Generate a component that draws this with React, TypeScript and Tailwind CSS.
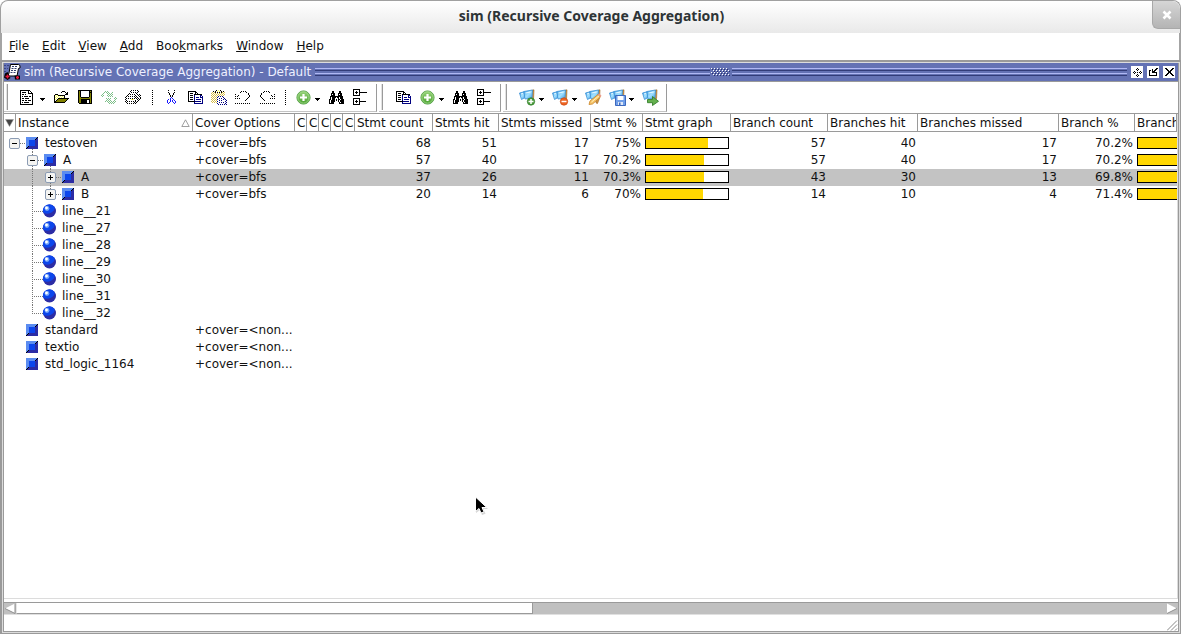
import React from "react";

type Palette = Record<string, string>;

const ink: Palette = {
  "#": "#000000",
  o: "#808000",
  y: "#ffff66",
  w: "#ffffff",
  b: "#1a1aff",
  n: "#000080",
  g: "#8f8f8f",
  l: "#c0c0c0",
  e: "#7cbf88",
  r: "#d00028",
  k: "#d6bd4a",
};

function Bitmap({ rows }: { rows: string[] }) {
  const width = Math.max(...rows.map((row) => row.length));
  const cells: React.ReactNode[] = [];
  rows.forEach((row, y) => {
    let x = 0;
    while (x < row.length) {
      const c = row[x];
      let end = x + 1;
      while (end < row.length && row[end] === c) end++;
      if (ink[c]) {
        cells.push(<rect key={`${x}-${y}`} x={x} y={y} width={end - x} height={1} fill={ink[c]} />);
      }
      x = end;
    }
  });
  return (
    <svg width={width} height={rows.length} viewBox={`0 0 ${width} ${rows.length}`} shapeRendering="crispEdges" aria-hidden="true" className="shrink-0">
      {cells}
    </svg>
  );
}

// Disabled icons are drawn with every second pixel left out.
function dither(art: string[]) {
  return art.map((row, y) => row.split("").map((c, x) => ((x + y) % 2 ? "." : c)).join(""));
}

const documentRows = [
  "##########......",
  "#wwwwwww#w#.....",
  "#w####ww#ww#....",
  "#wwwwwww#####...",
  "#w##w#wwwwww#...",
  "#wwwwwwwwwww#...",
  "#w#w####w##w#...",
  "#wwwwwwwwwww#...",
  "#w##w####www#...",
  "#wwwwwwwwwww#...",
  "#w##w##w###w#...",
  "#wwwwwwwwwww#...",
  "#w#w#####www#...",
  "#wwwwwwwwwww#...",
  "#############...",
];

const folderRows = [
  ".........###....",
  "........#...#.#.",
  ".............##.",
  "..###.......###.",
  ".#ywy#######....",
  ".#wywywywyw#....",
  ".#ywywywywy#....",
  ".#wyw###########",
  ".#yw#ooooooooo#.",
  ".#w#ooooooooo#..",
  ".##ooooooooo#...",
  ".###########....",
];

const saveRows = [
  "##############",
  "#o#wwwwwwww#o#",
  "#o#wwwwwwww###",
  "#o#wwwwwwww#o#",
  "#o#wwwwwwww#o#",
  "#o#wwwwwwww#o#",
  "#o#wwwwwwww#o#",
  "#oo########oo#",
  "#oooooooooooo#",
  "#oo#########o#",
  "#oo######ww#o#",
  "#oo######ww#o#",
  "#oo######ww#o#",
  ".#############",
];

const refreshRows = dither([
  "...eeeee........",
  "..eeeeeee..e....",
  ".eee..eeeeee....",
  "eee....eeeee....",
  "eee...eeeeee....",
  ".e.....eeeee..e.",
  "..............ee",
  ".....eeeee...eee",
  ".....eeee....eee",
  "....eeeeee..eee.",
  "....eeeeeeeeeee.",
  "....e..eeeeeee..",
  "........eeeee...",
]);

const printRows = [
  "......#.#.#.#...",
  ".....#.......#..",
  "......#.#.#.#...",
  "....#......#....",
  "...#.#.#.#..#.#.",
  "..#.......#..#.#",
  ".#.#.#.#.#.#..#.",
  "#.........#.#..#",
  ".#.#.#.#.#.#.#.#",
  "#.....yky...#.#.",
  ".#........#..#..",
  "#.#.#.#.#.#.#...",
  ".#.......#.#....",
  "..#.#.#.#.#.....",
];

const cutRows = [
  ".#.....#.",
  ".........",
  ".#.....#.",
  "..#...#..",
  "..#...#..",
  "...#.#...",
  "...#.#...",
  "....b....",
  "...b.b...",
  ".b.b..b..",
  "b..b.b.b.",
  "b..b.b..b",
  "b.b...b.b",
  ".b.....b.",
];

const copyRows = [
  "########.......",
  "#wwwwww##......",
  "#w###ww#w#.....",
  "#wwwww########.",
  "#w###wnwwwwwnn.",
  "#wwwwwnwwwwwnwn",
  "#w###wnwnnnwnnn",
  "#wwwwwnwwwwwwwn",
  "#w###wnwnnnnnwn",
  "#wwwwwnwwwwwwwn",
  "#######nnnnnnwn",
  "......nwwwwwwwn",
  "......nnnnnnnnn",
];

const pasteRows = [
  ".....#.y.#......",
  "..#.#.y.y.#.#...",
  ".k.k#.#.#.#k.k..",
  "k.k.k.k.k.k.k...",
  ".k.k.k.k.k.k.k..",
  "k.k.k.k.k.k.k...",
  ".k.k.k.n.n.n....",
  "k.k.k.n.....n...",
  ".k.k.k..n.n..n..",
  "k.k.k.n.....n.n.",
  ".k.k.k..n.n....n",
  "k.k.k.n.......n.",
  ".k.k.k..n.n.n..n",
  "......n.......n.",
  ".......n.n.n.n.n",
];

const undoRows = [
  "......#.#.#.....",
  ".....#.....#....",
  ".............#..",
  "#............#..",
  "...#..........#.",
  "#.#...........#.",
  ".............#..",
  "#.#.#.......#...",
  "...........#....",
  "..........#.....",
  "................",
  "................",
  "#.#.#.#.#.#.#.#.",
];

const redoRows = undoRows.map((row) => row.split("").reverse().join(""));

const searchRows = [
  "...##.....##...",
  "...##.....##...",
  "..####...####..",
  "..#w##...#w##..",
  "..####...####..",
  ".#############.",
  ".#w####.##w###.",
  ".#w###...#w###.",
  "##w###w#w##w###",
  "#w####w#w#w####",
  "#w####...#w####",
  "#w###.....#w###",
  "#####.....#####",
];

const treeRows = [
  "#######.......",
  "#wwwww#.......",
  "#ww#ww#.......",
  "#w###w########",
  "#ww#ww#.......",
  "#wwwww#.......",
  "#######.......",
  "..............",
  "..............",
  "#######.......",
  "#wwwww#.......",
  "#ww#ww#.......",
  "#w###w#######.",
  "#ww#ww#.......",
  "#wwwww#.......",
  "#######.......",
];

const moveRows = [
  "....#....",
  "...#.#...",
  "....#....",
  ".#.....#.",
  "#.#.#.#.#",
  ".#.....#.",
  "....#....",
  "...#.#...",
  "....#....",
];

const dockRows = [
  ".......##",
  "...#..##.",
  "##.#.##..",
  "#..###...",
  "#..#####.",
  "#......#.",
  "#......#.",
  "########.",
];

const closeRows = [
  "##.....##",
  ".##...##.",
  "..##.##..",
  "...###...",
  "...###...",
  "..##.##..",
  ".##...##.",
  "##.....##",
];

function AddIcon() {
  return (
    <svg width="15" height="15" viewBox="0 0 15 15" aria-hidden="true">
      <defs>
        <linearGradient id="addFill" x1="0" y1="0" x2="0" y2="1">
          <stop offset="0" stopColor="#9bd47c" />
          <stop offset="1" stopColor="#46a02e" />
        </linearGradient>
      </defs>
      <circle cx="7.5" cy="7.5" r="6.6" fill="url(#addFill)" stroke="#5fa651" />
      <circle cx="7.5" cy="7.5" r="5.6" fill="none" stroke="#a5dc8c" strokeWidth="0.8" />
      <path d="M7.5 4v7M4 7.5h7" stroke="#fff" strokeWidth="2.2" />
    </svg>
  );
}

type Badge = "add" | "remove" | "edit" | "save" | "export";

function FilterIcon({ badge }: { badge: Badge }) {
  return (
    <svg width="17" height="17" viewBox="0 0 17 17" aria-hidden="true">
      <defs>
        <linearGradient id="lens" x1="0" y1="0" x2="1" y2="1">
          <stop offset="0" stopColor="#2f9ae8" />
          <stop offset="0.5" stopColor="#a4e2ff" />
          <stop offset="1" stopColor="#3c9ae6" />
        </linearGradient>
      </defs>
      <path d="M12 1.500 15 .8 14.600 9 12.500 14.500 11 14z" fill="#cf9344" stroke="#9c6420" strokeWidth="0.6" />
      <path d="M.5 4 5 2.800 6 8.500 2.500 10.500z" fill="url(#lens)" stroke="#3a8fd4" strokeWidth="0.8" />
      <path d="M4.800 2.500 13.500 1 13 9 6 10z" fill="url(#lens)" stroke="#3a8fd4" strokeWidth="0.8" />
      <path d="M2 5 4 4.500M6.500 4 11.500 3" stroke="#e9f8ff" strokeWidth="1.2" />
      {badge === "add" && (
        <>
          <circle cx="12" cy="12.5" r="3.7" fill="#4c9c3c" stroke="#2f7d2b" strokeWidth="0.7" />
          <path d="M12 10v5M9.5 12.5h5" stroke="#fff" strokeWidth="1.5" />
        </>
      )}
      {badge === "remove" && (
        <>
          <circle cx="12" cy="12.5" r="3.7" fill="#ee6420" stroke="#cc4812" strokeWidth="0.7" />
          <path d="M9.5 12.5h5" stroke="#fff" strokeWidth="1.5" />
        </>
      )}
      {badge === "edit" && (
        <>
          <path d="M4 15.5 5 12 13 5.5l2.5 2.5L7.5 15z" fill="#f7c66a" stroke="#c98324" strokeWidth="0.8" />
          <path d="M6.5 13 14 6.8" stroke="#fff1bd" />
          <path d="m13 5.5 1.2-1 2.3 2.3-1 1.2z" fill="#e99a8c" />
        </>
      )}
      {badge === "save" && (
        <>
          <path d="M6.5 6.5h10v10h-10z" fill="#6f9ee8" stroke="#3c69be" />
          <path d="M8.5 7h6v4h-6z" fill="#fff" />
          <path d="M9 13h5v3H9z" fill="#dfe8f7" />
          <path d="M10 13.5h1.5V16H10z" fill="#3c69be" />
        </>
      )}
      {badge === "export" && (
        <path d="M5.5 10.5h5V7.5l6 4.8-6 4.2v-2.8h-5z" fill="#65b04e" stroke="#35802c" strokeWidth="0.9" />
      )}
    </svg>
  );
}

function ToolButton({ label, menu, children }: { label: string; menu?: boolean; children: React.ReactNode }) {
  return (
    <button type="button" aria-label={label} className="flex h-6 shrink-0 items-center">
      <span className="flex w-6 justify-center">{children}</span>
      {menu && (
        <svg width="9" height="9" viewBox="0 0 9 9" shapeRendering="crispEdges" aria-hidden="true">
          <path d="M0 5h5v1H0zM1 6h3v1H1zM2 7h1v1H2z" />
        </svg>
      )}
    </button>
  );
}

function ToolGroup({ label, children }: { label: string; children: React.ReactNode }) {
  return (
    <div role="toolbar" aria-label={label} className="flex h-7 items-center border-r border-b border-[#9a9a9a] border-b-[#c4c4c4] pr-1">
      <span className="mr-2 ml-0.5 h-[26px] w-0.5 border-r border-l border-r-[#9a9a9a] border-l-[#e2e2e2]" />
      {children}
    </div>
  );
}

function DottedRule({ wide }: { wide?: boolean }) {
  return (
    <span className={wide ? "flex w-[14px] justify-center" : "flex w-3 justify-center"}>
      <svg width="1" height="15" viewBox="0 0 1 15" shapeRendering="crispEdges" aria-hidden="true">
        <path d="M.5 0v15" stroke="#000" strokeDasharray="1 1" />
      </svg>
    </span>
  );
}

type Kind = "block" | "process";

interface Row {
  name: string;
  kind: Kind;
  depth: number;
  toggle?: "open" | "closed";
  cover?: string;
  stmt?: [string, string, string, string];
  branch?: [string, string, string, string];
  selected?: boolean;
}

const rows: Row[] = [
  { name: "testoven", kind: "block", depth: 0, toggle: "open", cover: "+cover=bfs", stmt: ["68", "51", "17", "75%"], branch: ["57", "40", "17", "70.2%"] },
  { name: "A", kind: "block", depth: 1, toggle: "open", cover: "+cover=bfs", stmt: ["57", "40", "17", "70.2%"], branch: ["57", "40", "17", "70.2%"] },
  { name: "A", kind: "block", depth: 2, toggle: "closed", cover: "+cover=bfs", stmt: ["37", "26", "11", "70.3%"], branch: ["43", "30", "13", "69.8%"], selected: true },
  { name: "B", kind: "block", depth: 2, toggle: "closed", cover: "+cover=bfs", stmt: ["20", "14", "6", "70%"], branch: ["14", "10", "4", "71.4%"] },
  ...["21", "27", "28", "29", "30", "31", "32"].map((n): Row => ({ name: `line__${n}`, kind: "process", depth: 1 })),
  { name: "standard", kind: "block", depth: 0, cover: "+cover=<non..." },
  { name: "textio", kind: "block", depth: 0, cover: "+cover=<non..." },
  { name: "std_logic_1164", kind: "block", depth: 0, cover: "+cover=<non..." },
];

function TreeMark({ row, last }: { row: Row; last: boolean }) {
  const base = row.depth * 18;
  const mid = 10 + base;
  const width = 39 + base;
  const lines: string[] = [];
  if (row.toggle) lines.push(`M${base + 16} 8.5h6`);
  if (row.toggle === "open") lines.push(`M${28.5 + base} 14v3`);
  if (row.depth === 2) {
    lines.push("M28.5 0v17");
    lines.push(row.name === "B" ? "M46.5 0v4" : "M46.5 0v4M46.5 14v3");
  }
  if (row.depth === 1 && row.toggle) lines.push("M28.5 0v4M28.5 14v3");
  if (row.kind === "process") lines.push(last ? "M28.5 0v9M30 8.5h10" : "M28.5 0v17M30 8.5h10");
  return (
    <svg width={width} height="17" viewBox={`0 0 ${width} 17`} aria-hidden="true" className="shrink-0">
      <path d={lines.join("")} fill="none" stroke="#777" strokeDasharray="1 1" shapeRendering="crispEdges" />
      {row.toggle && (
        <>
          <rect x={mid - 4.5} y="3.5" width="10" height="10" rx="1.5" fill="#f4f4f2" stroke="#8c9cb4" />
          <path d={`M${mid - 2} 8.5h5`} stroke="#000" shapeRendering="crispEdges" />
          {row.toggle === "closed" && <path d={`M${mid + 0.5} 6v5`} stroke="#000" shapeRendering="crispEdges" />}
        </>
      )}
      {row.kind === "block" ? (
        <g transform={`translate(${22 + base} 2)`} shapeRendering="crispEdges">
          <path d="M0 0h12L0 12z" fill="#5b8cf0" />
          <path d="M12 0v12H0z" fill="#2c2ca4" />
          <path d="m0 12 3-3M9 3l3-3" stroke="#000" />
          <path d="M3 3h6v6H3z" fill="#0c46ec" />
        </g>
      ) : (
        <g>
          <circle cx="45.5" cy="8" r="6.5" fill="#2c2ca4" />
          <path d="M39.200 9.500A6.400 6.400 0 0 1 50.500 4c.8 2-1 4.500-3.500 5.800-3 1.400-5.500 1.200-7.800-.3z" fill="#0c46ec" />
          <circle cx="43" cy="5.500" r="2.400" fill="#78a8f8" />
          <circle cx="42.500" cy="5" r="1.400" fill="#fff" />
        </g>
      )}
    </svg>
  );
}

function Meter({ value, label }: { value: string; label: string }) {
  return (
    <div role="img" aria-label={`${label} ${value}`} className="mt-0.5 ml-0.5 h-3 w-[84px] border border-black bg-white">
      <div className="h-full bg-[#ffd700]" style={{ width: value }} />
    </div>
  );
}

const columns: [string, string][] = [
  ["Cover Options", "w-[102px]"],
  ["C", "w-3"],
  ["C", "w-3"],
  ["C", "w-3"],
  ["C", "w-3"],
  ["C", "w-3"],
  ["Stmt count", "w-[78px]"],
  ["Stmts hit", "w-[66px]"],
  ["Stmts missed", "w-[92px]"],
  ["Stmt %", "w-[52px]"],
  ["Stmt graph", "w-[88px]"],
  ["Branch count", "w-[97px]"],
  ["Branches hit", "w-[90px]"],
  ["Branches missed", "w-[141px]"],
  ["Branch %", "w-[76px]"],
  ["Branch graph", ""],
];

const headCell = "h-[18px] overflow-hidden border-r border-b border-[#9a9a9a] p-0 pl-0.5 text-left leading-[17px] font-normal";

function CoverageTable() {
  return (
    <table id="coverage" className="w-full table-fixed border-separate border-spacing-0 leading-[17px] whitespace-nowrap">
      <colgroup>
        <col className="w-3" />
        <col className="w-[177px]" />
        {columns.map(([, width], i) => (
          <col key={i} className={width} />
        ))}
      </colgroup>
      <thead>
        <tr>
          <th className="h-[18px] border-r border-b border-[#9a9a9a] p-0">
            <button type="button" aria-label="Choose columns" className="flex h-full w-full items-center justify-center">
              <svg width="9" height="8" viewBox="0 0 9 8" aria-hidden="true">
                <path d="M.5.5h8l-4 7z" fill="#444" stroke="#999" strokeWidth="0.5" />
              </svg>
            </button>
          </th>
          <th className={headCell}>
            <div className="flex items-center justify-between pt-px pr-0.5 leading-4">
              Instance
              <svg width="9" height="8" viewBox="0 0 9 8" aria-hidden="true">
                <path d="M4.500.8 8.200 7.500H.8z" fill="#fff" stroke="#888" strokeWidth="0.8" />
              </svg>
            </div>
          </th>
          {columns.map(([title], i) => (
            <th key={i} className={headCell}>
              <div className="pt-px leading-4">{title}</div>
            </th>
          ))}
        </tr>
      </thead>
      <tbody>
        <tr aria-hidden="true">
          <td colSpan={18} className="h-[3px] p-0" />
        </tr>
        {rows.map((row, i) => (
          <tr key={i} className={row.selected ? "bg-[#c3c3c3]" : ""}>
            <td colSpan={2} className="h-[17px] p-0">
              <div className={row.kind === "process" ? "flex h-[17px] gap-px" : "flex h-[17px] gap-0.5"}>
                <TreeMark row={row} last={row.name === "line__32"} />
                <span>{row.name}</span>
              </div>
            </td>
            <td className="p-0 pl-0.5">{row.cover}</td>
            <td colSpan={5} className="p-0" />
            {row.stmt ? (
              row.stmt.map((value, n) => (
                <td key={n} className="p-0 pr-0.5 text-right">
                  {value}
                </td>
              ))
            ) : (
              <td colSpan={4} className="p-0" />
            )}
            <td className="p-0 align-top">{row.stmt && <Meter value={row.stmt[3]} label="Statement coverage" />}</td>
            {row.branch ? (
              row.branch.map((value, n) => (
                <td key={n} className="p-0 pr-0.5 text-right">
                  {value}
                </td>
              ))
            ) : (
              <td colSpan={4} className="p-0" />
            )}
            <td className="overflow-hidden p-0 align-top">{row.branch && <Meter value={row.branch[3]} label="Branch coverage" />}</td>
          </tr>
        ))}
      </tbody>
    </table>
  );
}

const menus: [string, string, string][] = [
  ["", "F", "ile"],
  ["", "E", "dit"],
  ["", "V", "iew"],
  ["", "A", "dd"],
  ["Boo", "k", "marks"],
  ["", "W", "indow"],
  ["", "H", "elp"],
];

function Groove() {
  return (
    <span className="flex h-2 flex-1 flex-col justify-between">
      <span className="h-[3px] border-t border-b border-t-[#b0b8f4] border-b-[#323c78]" />
      <span className="h-[3px] border-t border-b border-t-[#b0b8f4] border-b-[#323c78]" />
    </span>
  );
}

function PaneButton({ label, art }: { label: string; art: string[] }) {
  return (
    <button type="button" aria-label={label} className="flex h-3 w-3 items-center justify-center bg-white">
      <Bitmap rows={art} />
    </button>
  );
}

export default function App() {
  return (
    <div className="flex h-screen min-w-0 flex-col overflow-hidden bg-white font-['DejaVu_Sans','Liberation_Sans',sans-serif] text-[12px] leading-4 text-[#111]">
      <header className="flex h-[33px] shrink-0 rounded-t-lg border-x border-t border-[#a0a0a0] bg-linear-to-b from-white to-[#e9e9e9]">
        <h1 className="flex flex-1 items-center justify-center pb-0.5 pl-[30px] font-['Noto_Sans','Open_Sans',sans-serif] text-[14px] font-bold text-[#2e3436]">
          sim (Recursive Coverage Aggregation)
        </h1>
        <button type="button" aria-label="Close window" className="flex h-7 w-7 items-center justify-center rounded-tr-lg rounded-bl-md border-b border-l border-[#a8a8a8] bg-linear-to-b from-[#d6d6d6] to-[#b4b4b4]">
          <svg width="10" height="10" viewBox="0 0 10 10" aria-hidden="true">
            <path d="m1.500 1.500 7 7m0-7-7 7" stroke="#fff" strokeWidth="2.600" />
          </svg>
        </button>
      </header>

      <nav aria-label="Main menu" className="flex h-[27px] shrink-0 items-center border-r-2 border-l-2 border-[#a4a4a4] pb-0.5">
        {menus.map(([before, key, after]) => (
          <button key={key} type="button" className="pr-1.5 pl-[7px]">
            {before}
            <u>{key}</u>
            {after}
          </button>
        ))}
      </nav>

      <main className="flex min-h-0 flex-1 flex-col border-t-2 border-r border-b border-l-2 border-[#9a9a9a]">
        <div className="flex min-h-0 flex-1 flex-col border border-[#dcdcdc]">
          <div className="flex min-h-0 flex-1 flex-col border-r border-b border-l border-[#9a9a9a]">
            <div className="flex h-[18px] shrink-0 items-center bg-[#6472b4] pr-[3px] text-[#eef0ff]">
              <svg width="17" height="16" viewBox="0 0 17 16" aria-hidden="true">
                <path d="M0 1.500h5M0 4.500h4M0 7.500h3" stroke="#3c4684" strokeDasharray="2 1" />
                <path d="M6.500.5h8l1.500 1v2.500l-1.500.5-1.500 7.500h-9l1-3z" fill="#fff" stroke="#000" />
                <path d="M8 2.500h5M7.500 4.500h5M7 6.500h5M6.500 8.500h5" stroke="#34406c" strokeDasharray="2 1 3 1" />
                <path d="M1 9.500 3.500 8l3 6-3 2L0 13.500zM10.500 11.500h5.500v4h-5z" fill="#000" />
                <path d="M3.500 10.500v4M1.500 12.500h4M13.500 12v3M12 13.500h3" stroke="#e8183c" strokeWidth="1.600" />
              </svg>
              <h2 className="mr-1 ml-[3px]">sim (Recursive Coverage Aggregation) - Default</h2>
              <Groove />
              <svg width="22" height="8" viewBox="0 0 22 8" shapeRendering="crispEdges" aria-hidden="true">
                <path d="M1 .5h18M3 2.500h18M1 4.500h18M3 6.500h18" stroke="#fff" strokeDasharray="1 2" />
                <path d="M2 1.500h18M4 3.500h16M2 5.500h18M4 7.500h16" stroke="#28306c" strokeDasharray="1 2" />
              </svg>
              <Groove />
              <div className="ml-1 flex gap-1">
                <PaneButton label="Move pane" art={moveRows} />
                <PaneButton label="Undock pane" art={dockRows} />
                <PaneButton label="Close pane" art={closeRows} />
              </div>
            </div>

            <div className="flex h-[33px] shrink-0 items-center gap-0.5 border-t border-b border-[#9a9a9a]">
              <ToolGroup label="Standard">
                <ToolButton label="New" menu><Bitmap rows={documentRows} /></ToolButton>
                <ToolButton label="Open"><Bitmap rows={folderRows} /></ToolButton>
                <ToolButton label="Save"><Bitmap rows={saveRows} /></ToolButton>
                <ToolButton label="Refresh"><Bitmap rows={refreshRows} /></ToolButton>
                <ToolButton label="Print"><Bitmap rows={printRows} /></ToolButton>
                <DottedRule wide />
                <ToolButton label="Cut"><Bitmap rows={cutRows} /></ToolButton>
                <ToolButton label="Copy"><Bitmap rows={copyRows} /></ToolButton>
                <ToolButton label="Paste"><Bitmap rows={pasteRows} /></ToolButton>
                <ToolButton label="Undo"><Bitmap rows={undoRows} /></ToolButton>
                <ToolButton label="Redo"><Bitmap rows={redoRows} /></ToolButton>
                <DottedRule />
                <ToolButton label="Add" menu><AddIcon /></ToolButton>
                <ToolButton label="Find"><Bitmap rows={searchRows} /></ToolButton>
                <ToolButton label="Expand"><Bitmap rows={treeRows} /></ToolButton>
              </ToolGroup>
              <ToolGroup label="Edit">
                <ToolButton label="Copy selection"><Bitmap rows={copyRows} /></ToolButton>
                <ToolButton label="Add selection" menu><AddIcon /></ToolButton>
                <ToolButton label="Find instance"><Bitmap rows={searchRows} /></ToolButton>
                <ToolButton label="Expand instance"><Bitmap rows={treeRows} /></ToolButton>
              </ToolGroup>
              <ToolGroup label="Bookmarks">
                <ToolButton label="Add bookmark" menu><FilterIcon badge="add" /></ToolButton>
                <ToolButton label="Delete bookmark" menu><FilterIcon badge="remove" /></ToolButton>
                <ToolButton label="Manage bookmarks"><FilterIcon badge="edit" /></ToolButton>
                <ToolButton label="Save bookmarks" menu><FilterIcon badge="save" /></ToolButton>
                <ToolButton label="Jump to bookmark"><FilterIcon badge="export" /></ToolButton>
              </ToolGroup>
            </div>

            <div className="relative min-h-0 flex-1 overflow-hidden border-r border-b border-[#dcdcdc]">
              <CoverageTable />
              <svg width="16" height="21" viewBox="0 0 16 21" aria-hidden="true" className="absolute top-[382px] left-[470px]">
                <path d="M2 2v15l4-3 2 5 3.500-1.200-2-4.800H14z" fill="#bbb" opacity="0.6" />
                <path d="M1.500 1v14.500L5 12.500l2 4.500 3-1.200-2-4.300h4.800z" fill="#000" stroke="#fff" strokeWidth="1" />
              </svg>
            </div>

            <div role="scrollbar" aria-controls="coverage" aria-orientation="horizontal" aria-valuenow={0} className="mt-[3px] flex h-[13px] shrink-0 border-t border-b border-t-[#9a9a9a] border-b-[#e0e0e0] bg-[#c0c0c0]">
              <button type="button" aria-label="Scroll left" className="w-3">
                <svg width="12" height="11" viewBox="0 0 12 11" aria-hidden="true">
                  <path d="M11 .5v10L1 5.500z" fill="#fff" />
                  <path d="m1 5.500 10 5V.5" fill="none" stroke="#8f8f8f" />
                </svg>
              </button>
              <span className="h-full w-[44%] border-r border-b border-l border-[#9a9a9a] border-l-[#e6e6e6] bg-white" />
              <span className="flex-1" />
              <button type="button" aria-label="Scroll right" className="w-3">
                <svg width="12" height="11" viewBox="0 0 12 11" aria-hidden="true">
                  <path d="M1 .5v10l10-5z" fill="#fff" />
                  <path d="m1 10.500 10-5" stroke="#8f8f8f" />
                </svg>
              </button>
            </div>
            <footer className="flex h-4 shrink-0 items-end justify-end">
              <svg width="11" height="11" viewBox="0 0 11 11" aria-hidden="true">
                <path d="M0 10.500 10 .5M4 10.500l6-6M8 10.500l2-2" stroke="#888" />
              </svg>
            </footer>
          </div>
        </div>
      </main>
    </div>
  );
}
